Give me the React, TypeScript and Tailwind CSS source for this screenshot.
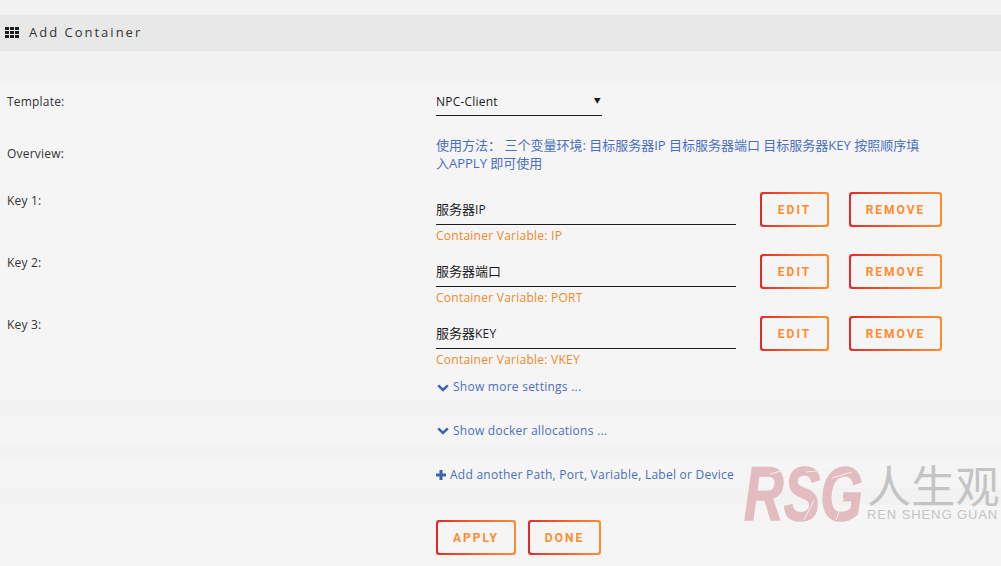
const font = "font-['Open_Sans','Noto_Sans_CJK_SC',sans-serif]";

const GridIcon = () => (
  <svg width="14" height="11" viewBox="0 0 14 11" className="fill-[#1c1c1c]">
    <rect x="0" y="0" width="4" height="3" />
    <rect x="5" y="0" width="4" height="3" />
    <rect x="10" y="0" width="4" height="3" />
    <rect x="0" y="4" width="4" height="3" />
    <rect x="5" y="4" width="4" height="3" />
    <rect x="10" y="4" width="4" height="3" />
    <rect x="0" y="8" width="4" height="3" />
    <rect x="5" y="8" width="4" height="3" />
    <rect x="10" y="8" width="4" height="3" />
  </svg>
);

const ChevronIcon = () => (
  <svg width="12" height="8" viewBox="0 0 12 8" className="mr-[4px] mt-[1px]">
    <path d="M1.2 1.4 L6 6 L10.8 1.4" fill="none" stroke="#3f62b5" strokeWidth="2.6" />
  </svg>
);

const PlusIcon = () => (
  <svg width="10" height="10" viewBox="0 0 10 10" className="mr-[4px]">
    <path d="M5 0 V10 M0 5 H10" stroke="#3f62b5" strokeWidth="3" />
  </svg>
);

const GradientButton = ({ label, width }: { label: string; width: string }) => (
  <div className={`${width} h-[35px] rounded-[3px] p-[2px] bg-gradient-to-r from-[#e22828] to-[#ff8c2f]`}>
    <div className="h-full rounded-[2px] bg-[#f5f5f5] flex items-center justify-center pt-[1px]">
      <span className="text-[12px] font-bold tracking-[2px] text-[#ff8c2f] font-['Roboto',sans-serif]">{label}</span>
    </div>
  </div>
);

const KeyRow = ({ label, value, latin, variable }: { label: string; value: string; latin?: string; variable: string }) => (
  <div className="flex h-[62px]">
    <div className="w-[436px] pl-[7px] pt-[8px] leading-[18px]">{label}</div>
    <div className="w-[300px]">
      <div className="h-[31px] mt-[10px] pt-[2px] border-b border-[#1c1c1c] flex items-center text-[#1c1c1c]">
        <span className="text-[13px] tracking-normal">{value}</span>
        {latin}
      </div>
      <div className="leading-[20px] pt-[1px] tracking-[0.25px] text-[#ee8a2a]">Container Variable: {variable}</div>
    </div>
    <div className="ml-[24px] mt-[8px]">
      <GradientButton label="EDIT" width="w-[69px]" />
    </div>
    <div className="ml-[20px] mt-[8px]">
      <GradientButton label="REMOVE" width="w-[93px]" />
    </div>
  </div>
);

const Watermark = () => (
  <div className="absolute left-[744px] top-[460px] w-[257px] h-[64px] flex">
    <div className="relative w-[123px] text-[76px] leading-[68px] font-bold italic text-[#e3bcc1] [-webkit-text-stroke:1.5px_#e3bcc1] font-['Liberation_Sans',sans-serif]">
      <span className="inline-block origin-left scale-x-[0.72]">RSG</span>
      <svg width="123" height="64" viewBox="0 0 123 64" className="absolute left-0 top-0">
        <path d="M26 14 L44 9 M62 12 L84 10 M88 18 L108 12 M70 40 L60 60 M100 38 L92 60 M20 50 L14 60" stroke="#f4eeee" strokeWidth="1" fill="none" />
      </svg>
    </div>
    <div className="flex flex-col text-[#c4c4c4]">
      <div className="text-[44px] leading-[48px] font-['Noto_Sans_CJK_SC',sans-serif]">人生观</div>
      <div className="text-[13px] leading-[14px] tracking-[0.9px] whitespace-nowrap font-['Liberation_Sans',sans-serif]">REN SHENG GUAN</div>
    </div>
  </div>
);

export default function App() {
  return (
    <div className={`relative w-[1001px] h-[566px] overflow-hidden bg-[#f2f2f2] text-[12px] tracking-[0.2px] text-[#333] ${font}`}>
      <div className="h-[15px]" />
      <div className="h-[36px] bg-[#e8e8e8] border-b border-[#e2e2e2] flex items-center pl-[5px] text-[#333]">
        <GridIcon />
        <span className="ml-[10px] text-[13px] tracking-[2px]">Add Container</span>
      </div>
      <div className="h-[32px]" />

      <div className="h-[317px] bg-[#f5f5f5]">
        <div className="flex h-[53px]">
          <div className="w-[436px] pl-[7px] pt-[10px] leading-[18px]">Template:</div>
          <div className="w-[166px] h-[33px] border-b border-[#1c1c1c] flex items-center justify-between pr-[1px] pt-[5px] text-[#1c1c1c]">
            <span>NPC-Client</span>
            <span className="text-[7px]">▼</span>
          </div>
        </div>
        <div className="flex h-[48px]">
          <div className="w-[436px] pl-[7px] h-[36px] flex items-center">Overview:</div>
          <div className="w-[488px] leading-[18px] text-[13px] tracking-normal text-[#4a6fc0]">
            使用方法： 三个变量环境: 目标服务器IP 目标服务器端口 目标服务器KEY 按照顺序填入APPLY 即可使用
          </div>
        </div>
        <KeyRow label="Key 1:" value="服务器" latin="IP" variable="IP" />
        <KeyRow label="Key 2:" value="服务器端口" variable="PORT" />
        <KeyRow label="Key 3:" value="服务器" latin="KEY" variable="VKEY" />
        <div className="mt-[8px] pl-[437px] leading-[18px] tracking-[0.25px] flex items-center text-[#4a6fc0]">
          <ChevronIcon />
          Show more settings ...
        </div>
      </div>

      <div className="h-[17px]" />
      <div className="h-[27px] bg-[#f5f5f5] pl-[437px] tracking-[0.25px] flex items-center text-[#4a6fc0]">
        <ChevronIcon />
        Show docker allocations ...
      </div>
      <div className="h-[17px]" />
      <div className="h-[27px] bg-[#f5f5f5] pl-[436px] tracking-[0.25px] flex items-center text-[#4a6fc0]">
        <PlusIcon />
        Add another Path, Port, Variable, Label or Device
      </div>
      <div className="h-[17px]" />
      <div className="h-[61px] bg-[#f5f5f5] pl-[436px] pt-[15px] flex gap-[12px]">
        <GradientButton label="APPLY" width="w-[80px]" />
        <GradientButton label="DONE" width="w-[73px]" />
      </div>

      <Watermark />
    </div>
  );
}
